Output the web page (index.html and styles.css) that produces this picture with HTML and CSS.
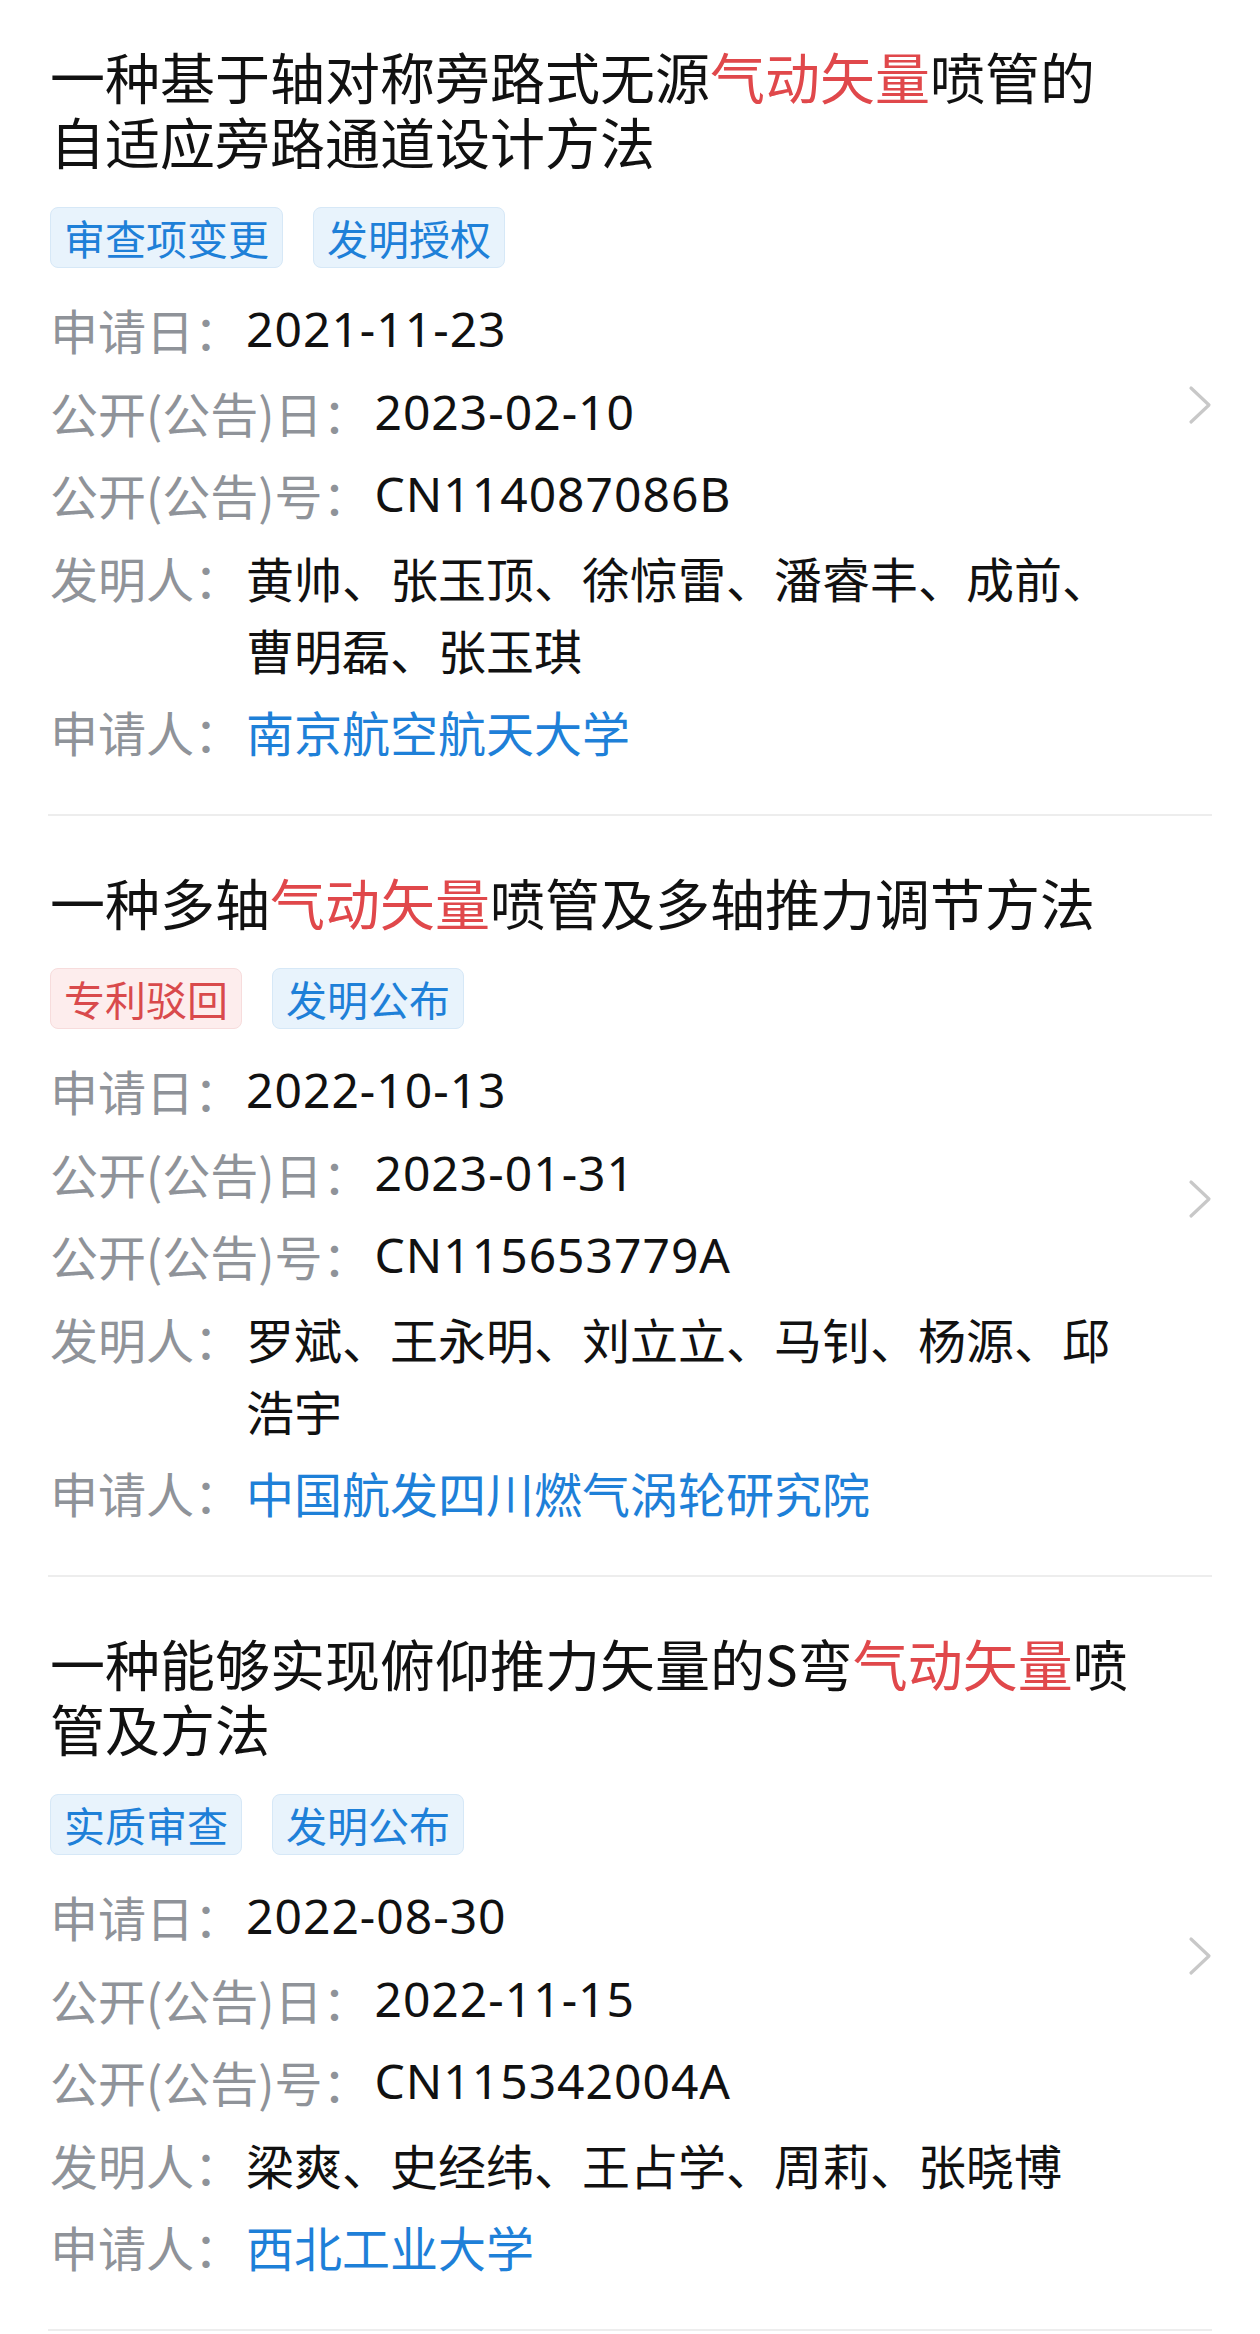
FILE: index.html
```html
<!DOCTYPE html>
<html lang="zh-CN">
<head>
<meta charset="utf-8">
<title>专利列表</title>
<link rel="stylesheet" href="styles.css">
</head>
<body>
<div class="list">
  <div class="item item-first">
    <div class="content">
      <div class="title">一种基于轴对称旁路式无源<span class="hl">气动矢量</span>喷管的自适应旁路通道设计方法</div>
      <div class="tags"><span class="tag tag-blue">审查项变更</span><span class="tag tag-blue">发明授权</span></div>
      <div class="info">
        <div class="row"><span class="label">申请日：</span><span class="value num">2021-11-23</span></div>
        <div class="row"><span class="label">公开(公告)日：</span><span class="value num">2023-02-10</span></div>
        <div class="row"><span class="label">公开(公告)号：</span><span class="value num">CN114087086B</span></div>
        <div class="row"><span class="label">发明人：</span><span class="value">黄帅、张玉顶、徐惊雷、潘睿丰、成前、曹明磊、张玉琪</span></div>
        <div class="row"><span class="label">申请人：</span><span class="value link">南京航空航天大学</span></div>
      </div>
    </div>
    <div class="arrow"><svg width="24" height="40" viewBox="0 0 24 40"><polyline points="3,3 21,20 3,37" fill="none" stroke="#c8c8c8" stroke-width="3.2" stroke-linecap="round" stroke-linejoin="round"/></svg></div>
  </div>

  <div class="item">
    <div class="content">
      <div class="title">一种多轴<span class="hl">气动矢量</span>喷管及多轴推力调节方法</div>
      <div class="tags"><span class="tag tag-red">专利驳回</span><span class="tag tag-blue">发明公布</span></div>
      <div class="info">
        <div class="row"><span class="label">申请日：</span><span class="value num">2022-10-13</span></div>
        <div class="row"><span class="label">公开(公告)日：</span><span class="value num">2023-01-31</span></div>
        <div class="row"><span class="label">公开(公告)号：</span><span class="value num">CN115653779A</span></div>
        <div class="row"><span class="label">发明人：</span><span class="value">罗斌、王永明、刘立立、马钊、杨源、邱浩宇</span></div>
        <div class="row"><span class="label">申请人：</span><span class="value link">中国航发四川燃气涡轮研究院</span></div>
      </div>
    </div>
    <div class="arrow"><svg width="24" height="40" viewBox="0 0 24 40"><polyline points="3,3 21,20 3,37" fill="none" stroke="#c8c8c8" stroke-width="3.2" stroke-linecap="round" stroke-linejoin="round"/></svg></div>
  </div>

  <div class="item">
    <div class="content">
      <div class="title">一种能够实现俯仰推力矢量的S弯<span class="hl">气动矢量</span>喷管及方法</div>
      <div class="tags"><span class="tag tag-blue">实质审查</span><span class="tag tag-blue">发明公布</span></div>
      <div class="info">
        <div class="row"><span class="label">申请日：</span><span class="value num">2022-08-30</span></div>
        <div class="row"><span class="label">公开(公告)日：</span><span class="value num">2022-11-15</span></div>
        <div class="row"><span class="label">公开(公告)号：</span><span class="value num">CN115342004A</span></div>
        <div class="row"><span class="label">发明人：</span><span class="value">梁爽、史经纬、王占学、周莉、张晓博</span></div>
        <div class="row"><span class="label">申请人：</span><span class="value link">西北工业大学</span></div>
      </div>
    </div>
    <div class="arrow"><svg width="24" height="40" viewBox="0 0 24 40"><polyline points="3,3 21,20 3,37" fill="none" stroke="#c8c8c8" stroke-width="3.2" stroke-linecap="round" stroke-linejoin="round"/></svg></div>
  </div>
</div>
</body>
</html>
```

FILE: styles.css
```css
html, body {
  margin: 0;
  padding: 0;
  background: #ffffff;
}

body {
  font-family: "Noto Sans CJK SC", "Noto Sans", sans-serif;
  color: #111111;
}

.list {
  padding: 0 48px;
}

.item {
  display: flex;
  align-items: center;
  padding: 53px 0 47px 2px;
  border-bottom: 2px solid #ededed;
}

.item-first {
  padding-top: 43px;
}

.content {
  flex: 1;
  min-width: 0;
}

.title {
  font-size: 55px;
  line-height: 65px;
  color: #111111;
}

.hl {
  color: #e0484b;
}

.tags {
  display: flex;
  gap: 30px;
  margin-top: 34px;
}

.tag {
  height: 59px;
  line-height: 59px;
  padding: 0 13px;
  font-size: 41px;
  border-radius: 8px;
  border: 1px solid transparent;
}

.tag-blue {
  background: #e8f3fc;
  border-color: #d6e8f7;
  color: #1e80d8;
}

.tag-red {
  background: #fdeded;
  border-color: #f7dcdc;
  color: #d94a4c;
}

.info {
  display: flex;
  flex-direction: column;
  gap: 10.5px;
  margin-top: 25px;
}

.row {
  display: flex;
  font-size: 48px;
  line-height: 72px;
}

.label {
  flex: none;
  margin-right: 4px;
  color: #8f9399;
}

.value {
  flex: 1;
  min-width: 0;
  color: #111111;
}

.value.num {
  font-family: "Noto Sans", "Noto Sans CJK SC", sans-serif;
  letter-spacing: 1px;
}

.value.link {
  color: #1e80d8;
}

.arrow {
  flex: none;
  width: 72px;
  display: flex;
  justify-content: flex-end;
}

.arrow svg {
  display: block;
}
```
